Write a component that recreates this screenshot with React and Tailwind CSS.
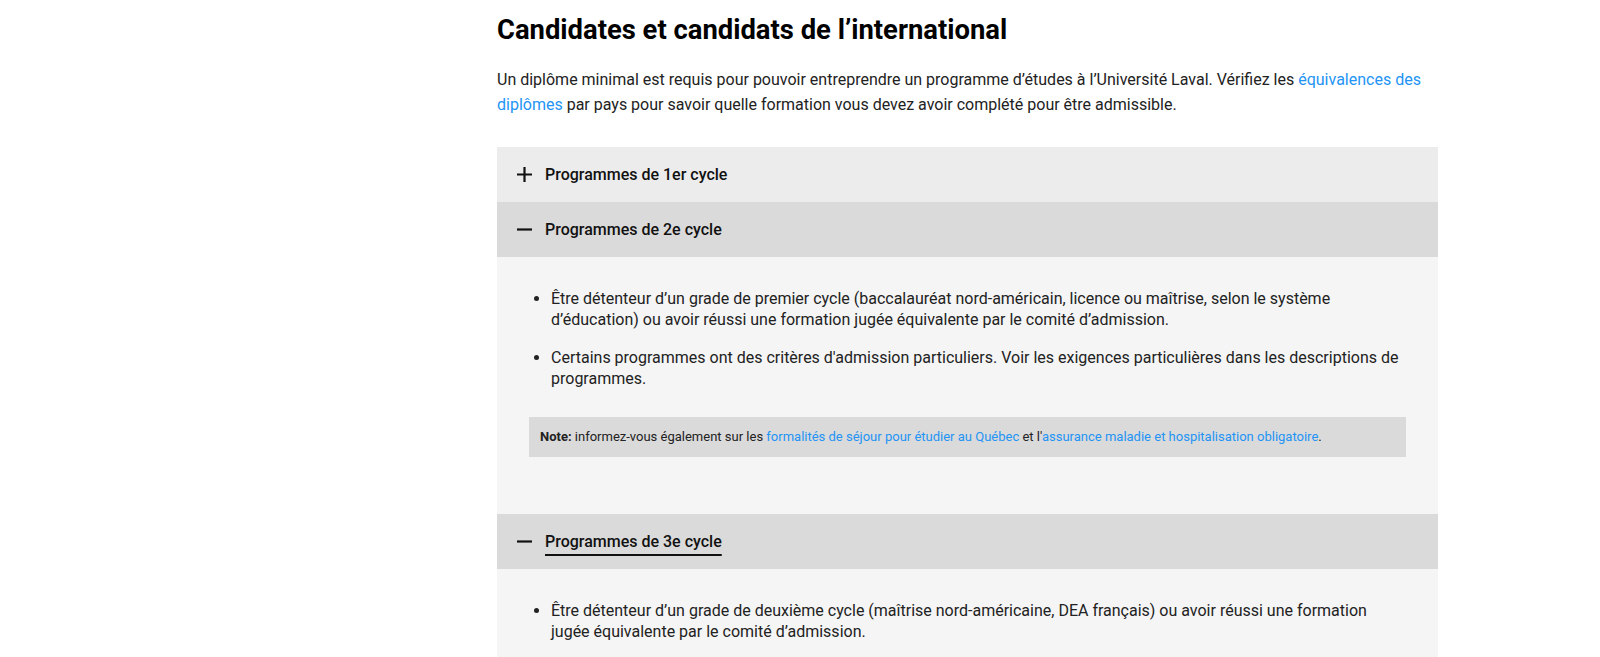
import React, { useState } from "react";

const font = { fontFamily: "Roboto, 'Noto Sans', sans-serif" };

function PlusIcon() {
  return (
    <svg width="17" height="17" viewBox="0 0 17 17" className="shrink-0">
      <path d="M8.5 1v15M1 8.5h15" stroke="#111" strokeWidth="2.2" fill="none" />
    </svg>
  );
}

function MinusIcon() {
  return (
    <svg width="17" height="17" viewBox="0 0 17 17" className="shrink-0">
      <path d="M1 8.5h15" stroke="#111" strokeWidth="2.2" fill="none" />
    </svg>
  );
}

function Link({ children }) {
  return <a href="#" className="text-[#2394f5]">{children}</a>;
}

function Row({ title, open, focused, onClick, children }) {
  return (
    <div>
      <button
        onClick={onClick}
        className={`w-full h-[55px] flex items-center gap-[12px] pl-[19px] text-left ${open ? "bg-[#dadada]" : "bg-[#ececec]"}`}
      >
        {open ? <MinusIcon /> : <PlusIcon />}
        <span
          className={`text-[16px] font-medium text-[#111] ${focused ? "underline decoration-2 underline-offset-[7px]" : ""}`}
        >
          {title}
        </span>
      </button>
      {open && <div className="bg-[#f5f5f5] px-8 pt-[32px] pb-[57px]">{children}</div>}
    </div>
  );
}

export default function App() {
  const [open, setOpen] = useState({ 1: false, 2: true, 3: true });
  const toggle = (k) => setOpen({ ...open, [k]: !open[k] });

  return (
    <div className="min-h-screen bg-white text-[#1a1a1a]" style={font}>
      <div className="flex">
        <aside className="w-[497px] shrink-0"></aside>
        <main className="w-[941px] pt-[12px]">
          <h2 className="text-[27.4px] font-bold text-black leading-[36px]">
            Candidates et candidats de l’international
          </h2>
          <p className="mt-[20px] text-[16px] leading-[24.5px] text-[#222]">
            Un diplôme minimal est requis pour pouvoir entreprendre un programme d’études à l’Université Laval. Vérifiez les <Link>équivalences des<br />diplômes</Link> par pays pour savoir quelle formation vous devez avoir complété pour être admissible.
          </p>

          <div className="mt-[30px]">
            <Row title="Programmes de 1er cycle" open={open[1]} onClick={() => toggle(1)}>
              <ul className="list-disc pl-[22px] text-[16px] leading-[20.5px] text-[#222]">
                <li>Être détenteur d’un diplôme d’études collégiales ou l’équivalent.</li>
              </ul>
            </Row>
            <Row title="Programmes de 2e cycle" open={open[2]} onClick={() => toggle(2)}>
              <ul className="list-disc pl-[22px] text-[16px] leading-[20.5px] text-[#222] flex flex-col gap-[18px]">
                <li>
                  Être détenteur d’un grade de premier cycle (baccalauréat nord-américain, licence ou maîtrise, selon le système<br />
                  d’éducation) ou avoir réussi une formation jugée équivalente par le comité d’admission.
                </li>
                <li>
                  Certains programmes ont des critères d'admission particuliers. Voir les exigences particulières dans les descriptions de<br />
                  programmes.
                </li>
              </ul>
              <div className="mt-[28px] bg-[#dadada] h-[40px] flex items-center px-[11px] text-[13px] text-[#222]">
                <p>
                  <span className="font-bold">Note:</span> informez-vous également sur les <Link>formalités de séjour pour étudier au Québec</Link> et l'<Link>assurance maladie et hospitalisation obligatoire</Link>.
                </p>
              </div>
            </Row>
            <Row title="Programmes de 3e cycle" open={open[3]} focused onClick={() => toggle(3)}>
              <ul className="list-disc pl-[22px] text-[16px] leading-[20.5px] text-[#222] flex flex-col gap-[18px]">
                <li>
                  Être détenteur d’un grade de deuxième cycle (maîtrise nord-américaine, DEA français) ou avoir réussi une formation<br />
                  jugée équivalente par le comité d’admission.
                </li>
              </ul>
            </Row>
          </div>
        </main>
      </div>
    </div>
  );
}
